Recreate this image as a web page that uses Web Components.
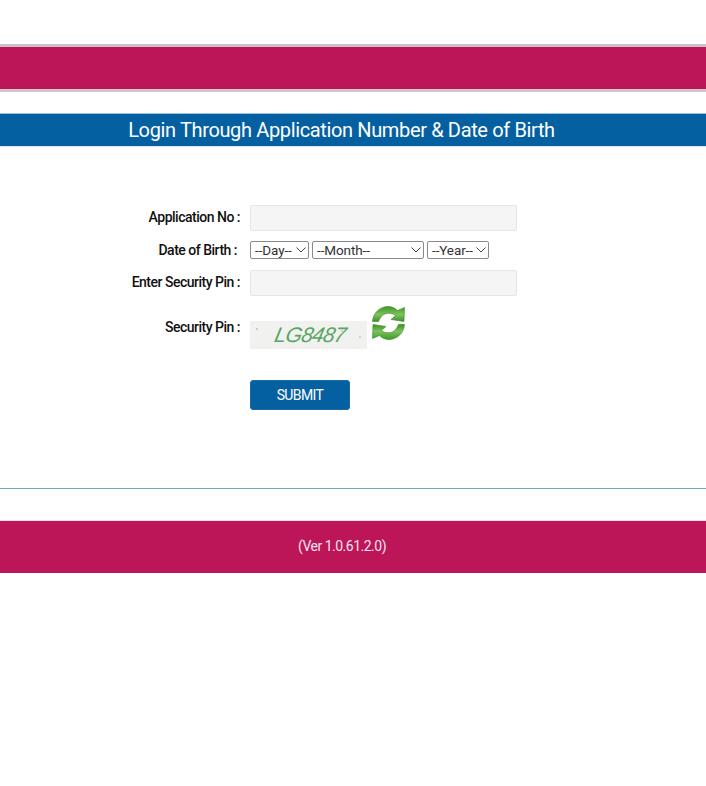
<!DOCTYPE html>
<html>
<head>
<meta charset="utf-8">
<title>Login</title>
<style>
html, body { margin: 0; padding: 0; background: #fff; }
body { font-family: Roboto, "Liberation Sans", sans-serif; }
</style>
</head>
<body>
<top-band></top-band>
<title-bar>Login Through Application Number &amp; Date of Birth</title-bar>
<login-form></login-form>
<page-footer>(Ver 1.0.61.2.0)</page-footer>

<script>
class TopBand extends HTMLElement {
  constructor() {
    super();
    this.attachShadow({ mode: 'open' });
    this.shadowRoot.innerHTML = `
      <style>
        :host { display: block; margin-top: 44px; height: 42px; background: #bc1558; border-top: 3px solid #c9c2c6; border-bottom: 3px solid #d3c5cc; }
      </style>`;
  }
}
customElements.define('top-band', TopBand);

class TitleBar extends HTMLElement {
  constructor() {
    super();
    this.attachShadow({ mode: 'open' });
    this.shadowRoot.innerHTML = `
      <style>
        :host { display: block; margin-top: 21px; height: 32px; background: #0560a2; border-top: 1px solid #9cc3dc; box-shadow: 0 1px 0 #d5e6f1; color: #fff; font-size: 20px; letter-spacing: -0.36px; line-height: 32px; text-align: center; padding-right: 23px; }
      </style>
      <slot></slot>`;
  }
}
customElements.define('title-bar', TitleBar);

class FormRow extends HTMLElement {
  constructor() {
    super();
    this.attachShadow({ mode: 'open' });
    this.shadowRoot.innerHTML = `
      <style>
        :host { display: grid; grid-template-columns: 240px 1fr; column-gap: 10px; align-items: center; }
        .label { text-align: right; font-size: 14px; font-weight: 500; letter-spacing: -0.5px; color: #111; white-space: nowrap; }
        :host([inset]) .label { padding-right: 3px; }
        :host([raised]) .label { padding-bottom: 2px; }
      </style>
      <div class="label"><slot name="label"></slot></div>
      <div><slot></slot></div>`;
  }
}
customElements.define('form-row', FormRow);

class TextBox extends HTMLElement {
  constructor() {
    super();
    this.attachShadow({ mode: 'open' });
    this.shadowRoot.innerHTML = `
      <style>
        :host { display: block; width: 267px; }
        input { display: block; box-sizing: border-box; width: 100%; height: 26px; margin: 0; padding: 0 8px; background: #f5f5f5; border: 1px solid #e6e6e6; border-radius: 2px; outline: none; }
      </style>
      <input type="text">`;
  }
}
customElements.define('text-box', TextBox);

class DateDrop extends HTMLElement {
  constructor() {
    super();
    this.attachShadow({ mode: 'open' });
    this.shadowRoot.innerHTML = `
      <style>
        :host { display: block; position: relative; height: 18px; }
        select { display: block; box-sizing: border-box; width: 100%; height: 18px; margin: 0; padding: 0 0 0 4px; appearance: none; background: #fff; border: 1px solid #8a8a8a; border-radius: 2px; color: #333; font: 13.500px/16px Roboto, "Liberation Sans", sans-serif; letter-spacing: -0.1px; }
        svg { position: absolute; right: 3px; top: 6px; width: 10px; height: 6px; pointer-events: none; }
      </style>
      <select><option>${this.getAttribute('text')}</option></select>
      <svg viewBox="0 0 10 6"><path d="M0.500 0.500L5 5L9.500 0.500" fill="none" stroke="#444" stroke-width="1"/></svg>`;
  }
}
customElements.define('date-drop', DateDrop);

class DateSelect extends HTMLElement {
  constructor() {
    super();
    this.attachShadow({ mode: 'open' });
    this.shadowRoot.innerHTML = `
      <style>
        :host { display: flex; gap: 3px; }
        .day { width: 59px; }
        .month { width: 112px; }
        .year { width: 62px; }
      </style>
      <date-drop class="day" text="--Day--"></date-drop>
      <date-drop class="month" text="--Month--"></date-drop>
      <date-drop class="year" text="--Year--"></date-drop>`;
  }
}
customElements.define('date-select', DateSelect);

class CaptchaBox extends HTMLElement {
  constructor() {
    super();
    this.attachShadow({ mode: 'open' });
    this.shadowRoot.innerHTML = `
      <style>
        :host { display: flex; align-items: flex-start; gap: 5px; }
        .pic { box-sizing: border-box; width: 117px; height: 28px; margin-top: 15px; padding-left: 25px; background-color: #f1f2ef;
          background-image: radial-gradient(circle, #c9cbc6 1px, transparent 1.500px), radial-gradient(circle, #d2d4cf 1px, transparent 1.500px), radial-gradient(circle, #d2d4cf 1px, transparent 1.500px);
          background-repeat: no-repeat; background-size: 4px 4px; background-position: 5px 6px, 90px 8px, 108px 14px;
          color: #5aa565; font: italic 21px/28px "Liberation Sans", sans-serif; letter-spacing: -0.7px; }
        .pic span { display: inline-block; transform: skewX(-12deg); }
        svg { display: block; width: 34px; height: 34px; }
      </style>
      <div class="pic"><span>LG8487</span></div>
      <svg viewBox="0 0 34 34">
        <defs>
          <linearGradient id="g" x1="0" y1="0" x2="0" y2="1">
            <stop offset="0" stop-color="#3f9a2b"/>
            <stop offset="0.55" stop-color="#7fc25c"/>
            <stop offset="1" stop-color="#3c8f28"/>
          </linearGradient>
        </defs>
        <path d="M0.500 15.500C1 7 8 0.500 16 0.500C20 0.500 23 2 25.500 4.500L32.500 1.500L32 15.500L19 13.500L23.500 9.500C20 6.500 12.500 6 9 11C8 12.500 7 14 6.500 15.500Z" fill="url(#g)" stroke="#388a25" stroke-width="0.600"/>
        <path d="M0.500 15.500C1 7 8 0.500 16 0.500C20 0.500 23 2 25.500 4.500L32.500 1.500L32 15.500L19 13.500L23.500 9.500C20 6.500 12.500 6 9 11C8 12.500 7 14 6.500 15.500Z" transform="rotate(180 16.500 17)" fill="url(#g)" stroke="#388a25" stroke-width="0.600"/>
      </svg>`;
  }
}
customElements.define('captcha-box', CaptchaBox);

class SubmitButton extends HTMLElement {
  constructor() {
    super();
    this.attachShadow({ mode: 'open' });
    this.shadowRoot.innerHTML = `
      <style>
        :host { display: block; }
        button { display: block; width: 100px; height: 30px; padding: 0; background: #0560a2; color: #fff; border: 1px solid #1a6aa6; border-radius: 3px; font: 14px Roboto, "Liberation Sans", sans-serif; letter-spacing: -0.6px; }
      </style>
      <button type="button"><slot></slot></button>`;
  }
}
customElements.define('submit-button', SubmitButton);

class LoginForm extends HTMLElement {
  constructor() {
    super();
    this.attachShadow({ mode: 'open' });
    this.shadowRoot.innerHTML = `
      <style>
        :host { display: block; padding-top: 59px; height: 283px; border-bottom: 1px solid #6ea9bd; }
        .r1 { height: 26px; }
        .r2 { height: 18px; margin-top: 10px; }
        .r3 { height: 26px; margin-top: 11px; }
        .r4 { align-items: start; margin-top: 10px; }
        .r4 span { display: block; margin-top: 13px; }
        .r5 { margin-top: 31px; }
      </style>
      <form-row class="r1" raised><span slot="label">Application No :</span><text-box></text-box></form-row>
      <form-row class="r2" inset><span slot="label">Date of Birth :</span><date-select></date-select></form-row>
      <form-row class="r3" raised><span slot="label">Enter Security Pin :</span><text-box></text-box></form-row>
      <form-row class="r4"><span slot="label">Security Pin :</span><captcha-box></captcha-box></form-row>
      <form-row class="r5"><span slot="label"></span><submit-button>SUBMIT</submit-button></form-row>`;
  }
}
customElements.define('login-form', LoginForm);

class PageFooter extends HTMLElement {
  constructor() {
    super();
    this.attachShadow({ mode: 'open' });
    this.shadowRoot.innerHTML = `
      <style>
        :host { display: block; margin-top: 32px; height: 52px; padding-right: 22px; background: #bc1558; box-shadow: 0 -1px 0 #f8dbe8, 0 1px 0 #f8dbe8; color: #f4e6ee; font-size: 14px; letter-spacing: -0.5px; line-height: 51px; text-align: center; }
      </style>
      <slot></slot>`;
  }
}
customElements.define('page-footer', PageFooter);
</script>
</body>
</html>
